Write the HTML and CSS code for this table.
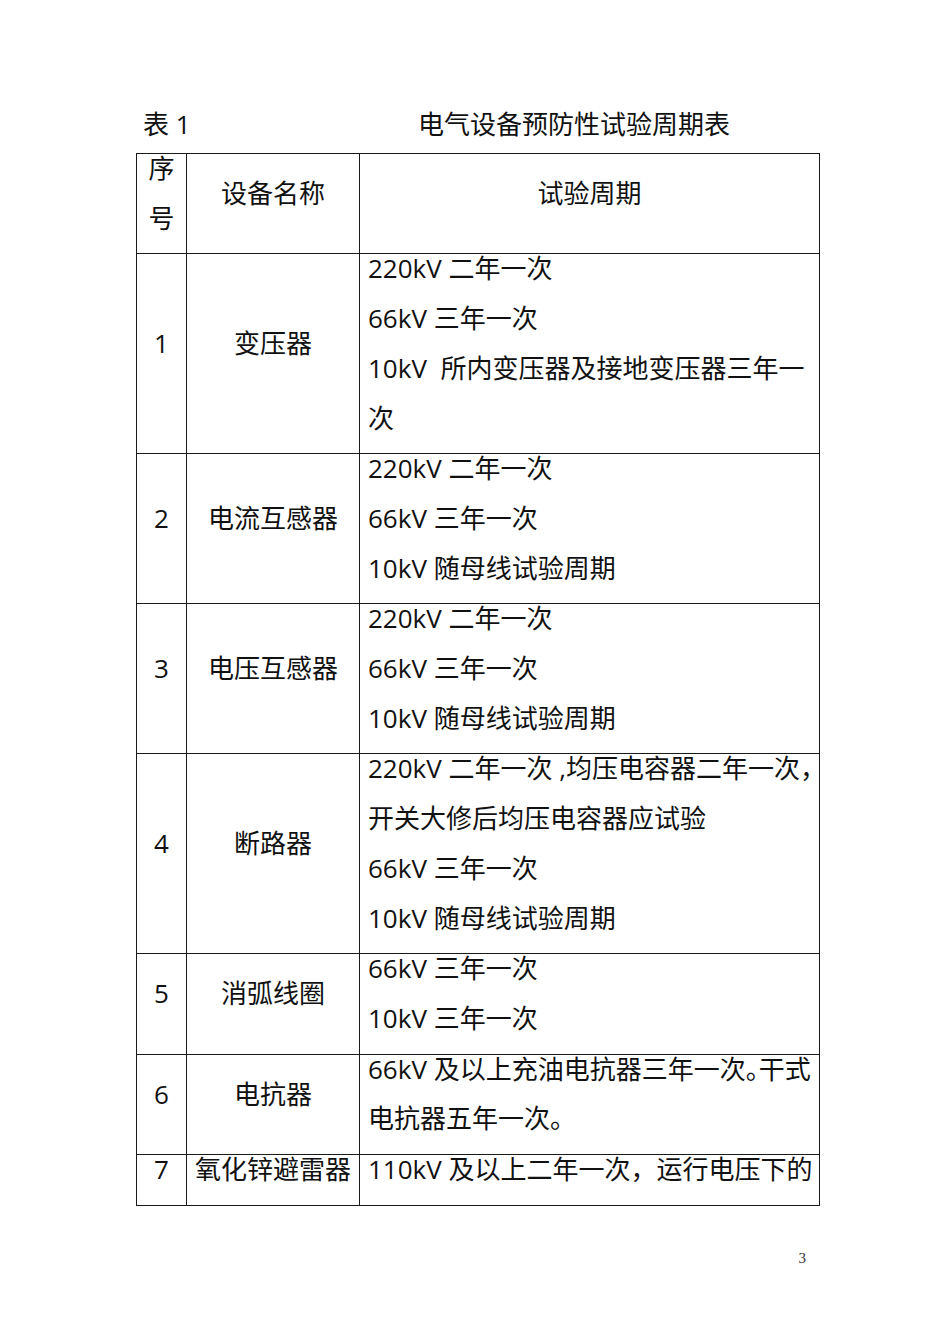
FILE: index.html
```html
<!DOCTYPE html>
<html lang="zh-CN">
<head>
<meta charset="utf-8">
<title>电气设备预防性试验周期表</title>
<link rel="stylesheet" href="styles.css">
</head>
<body>
<div class="page">
  <div class="caption"><span class="label">表 1</span><span class="title">电气设备预防性试验周期表</span></div>
  <table class="grid">
    <colgroup><col class="c1"><col class="c2"><col class="c3"></colgroup>
    <tr>
      <td class="num"><div class="t"><div>序</div><div>号</div></div></td>
      <td class="name"><div class="t">设备名称</div></td>
      <td class="head"><div class="t">试验周期</div></td>
    </tr>
    <tr>
      <td class="num"><div class="t">1</div></td>
      <td class="name"><div class="t">变压器</div></td>
      <td class="desc"><div class="t">
        <div class="ln">220kV 二年一次</div>
        <div class="ln">66kV 三年一次</div>
        <div class="ln">10kV&nbsp; 所内变压器及接地变压器三年一</div>
        <div class="ln">次</div>
      </div></td>
    </tr>
    <tr>
      <td class="num"><div class="t">2</div></td>
      <td class="name"><div class="t">电流互感器</div></td>
      <td class="desc"><div class="t">
        <div class="ln">220kV 二年一次</div>
        <div class="ln">66kV 三年一次</div>
        <div class="ln">10kV 随母线试验周期</div>
      </div></td>
    </tr>
    <tr>
      <td class="num"><div class="t">3</div></td>
      <td class="name"><div class="t">电压互感器</div></td>
      <td class="desc"><div class="t">
        <div class="ln">220kV 二年一次</div>
        <div class="ln">66kV 三年一次</div>
        <div class="ln">10kV 随母线试验周期</div>
      </div></td>
    </tr>
    <tr>
      <td class="num"><div class="t">4</div></td>
      <td class="name"><div class="t">断路器</div></td>
      <td class="desc"><div class="t">
        <div class="ln">220kV 二年一次 ,均压电容器二年一次<span class="tight">，</span></div>
        <div class="ln">开关大修后均压电容器应试验</div>
        <div class="ln">66kV 三年一次</div>
        <div class="ln">10kV 随母线试验周期</div>
      </div></td>
    </tr>
    <tr>
      <td class="num"><div class="t">5</div></td>
      <td class="name"><div class="t">消弧线圈</div></td>
      <td class="desc"><div class="t">
        <div class="ln">66kV 三年一次</div>
        <div class="ln">10kV 三年一次</div>
      </div></td>
    </tr>
    <tr>
      <td class="num"><div class="t">6</div></td>
      <td class="name"><div class="t">电抗器</div></td>
      <td class="desc"><div class="t">
        <div class="ln">66kV 及以上充油电抗器三年一次<span class="half">。</span>干式</div>
        <div class="ln">电抗器五年一次。</div>
      </div></td>
    </tr>
    <tr>
      <td class="num"><div class="t">7</div></td>
      <td class="name"><div class="t">氧化锌避雷器</div></td>
      <td class="desc"><div class="t">
        <div class="ln">110kV 及以上二年一次，运行电压下的</div>
      </div></td>
    </tr>
  </table>
  <div class="folio">3</div>
</div>
</body>
</html>
```
FILE: styles.css
```css
html, body {
  margin: 0;
  padding: 0;
  background: #ffffff;
}

body {
  font-family: "Open Sans", "Noto Sans CJK SC", sans-serif;
  color: #111111;
}

.page {
  width: 950px;
  box-sizing: border-box;
  padding: 109px 0 0 136px;
}

.caption {
  font-size: 26px;
  line-height: 30px;
  height: 30px;
  padding-left: 7px;
  margin-bottom: 14px;
  white-space: nowrap;
}

.label {
  display: inline-block;
  width: 275px;
}

.grid {
  border-collapse: collapse;
  table-layout: fixed;
  width: 683px;
  font-size: 26px;
  line-height: 49.7px;
}

.c1 { width: 50px; }
.c2 { width: 173px; }
.c3 { width: 460px; }

.grid td {
  border: 1px solid #1a1a1a;
  padding: 0;
  vertical-align: middle;
}

.num, .name, .head {
  text-align: center;
}

.desc {
  text-align: left;
  padding-left: 8px !important;
}

.t {
  margin: -10px 0 10px;
}

.ln {
  white-space: nowrap;
}

.tight {
  letter-spacing: -0.5em;
}

.half {
  letter-spacing: -0.5em;
}

.folio {
  margin-top: 42px;
  width: 670px;
  text-align: right;
  font-family: "Liberation Serif", serif;
  font-size: 15px;
  line-height: 20px;
  color: #333333;
}
```
